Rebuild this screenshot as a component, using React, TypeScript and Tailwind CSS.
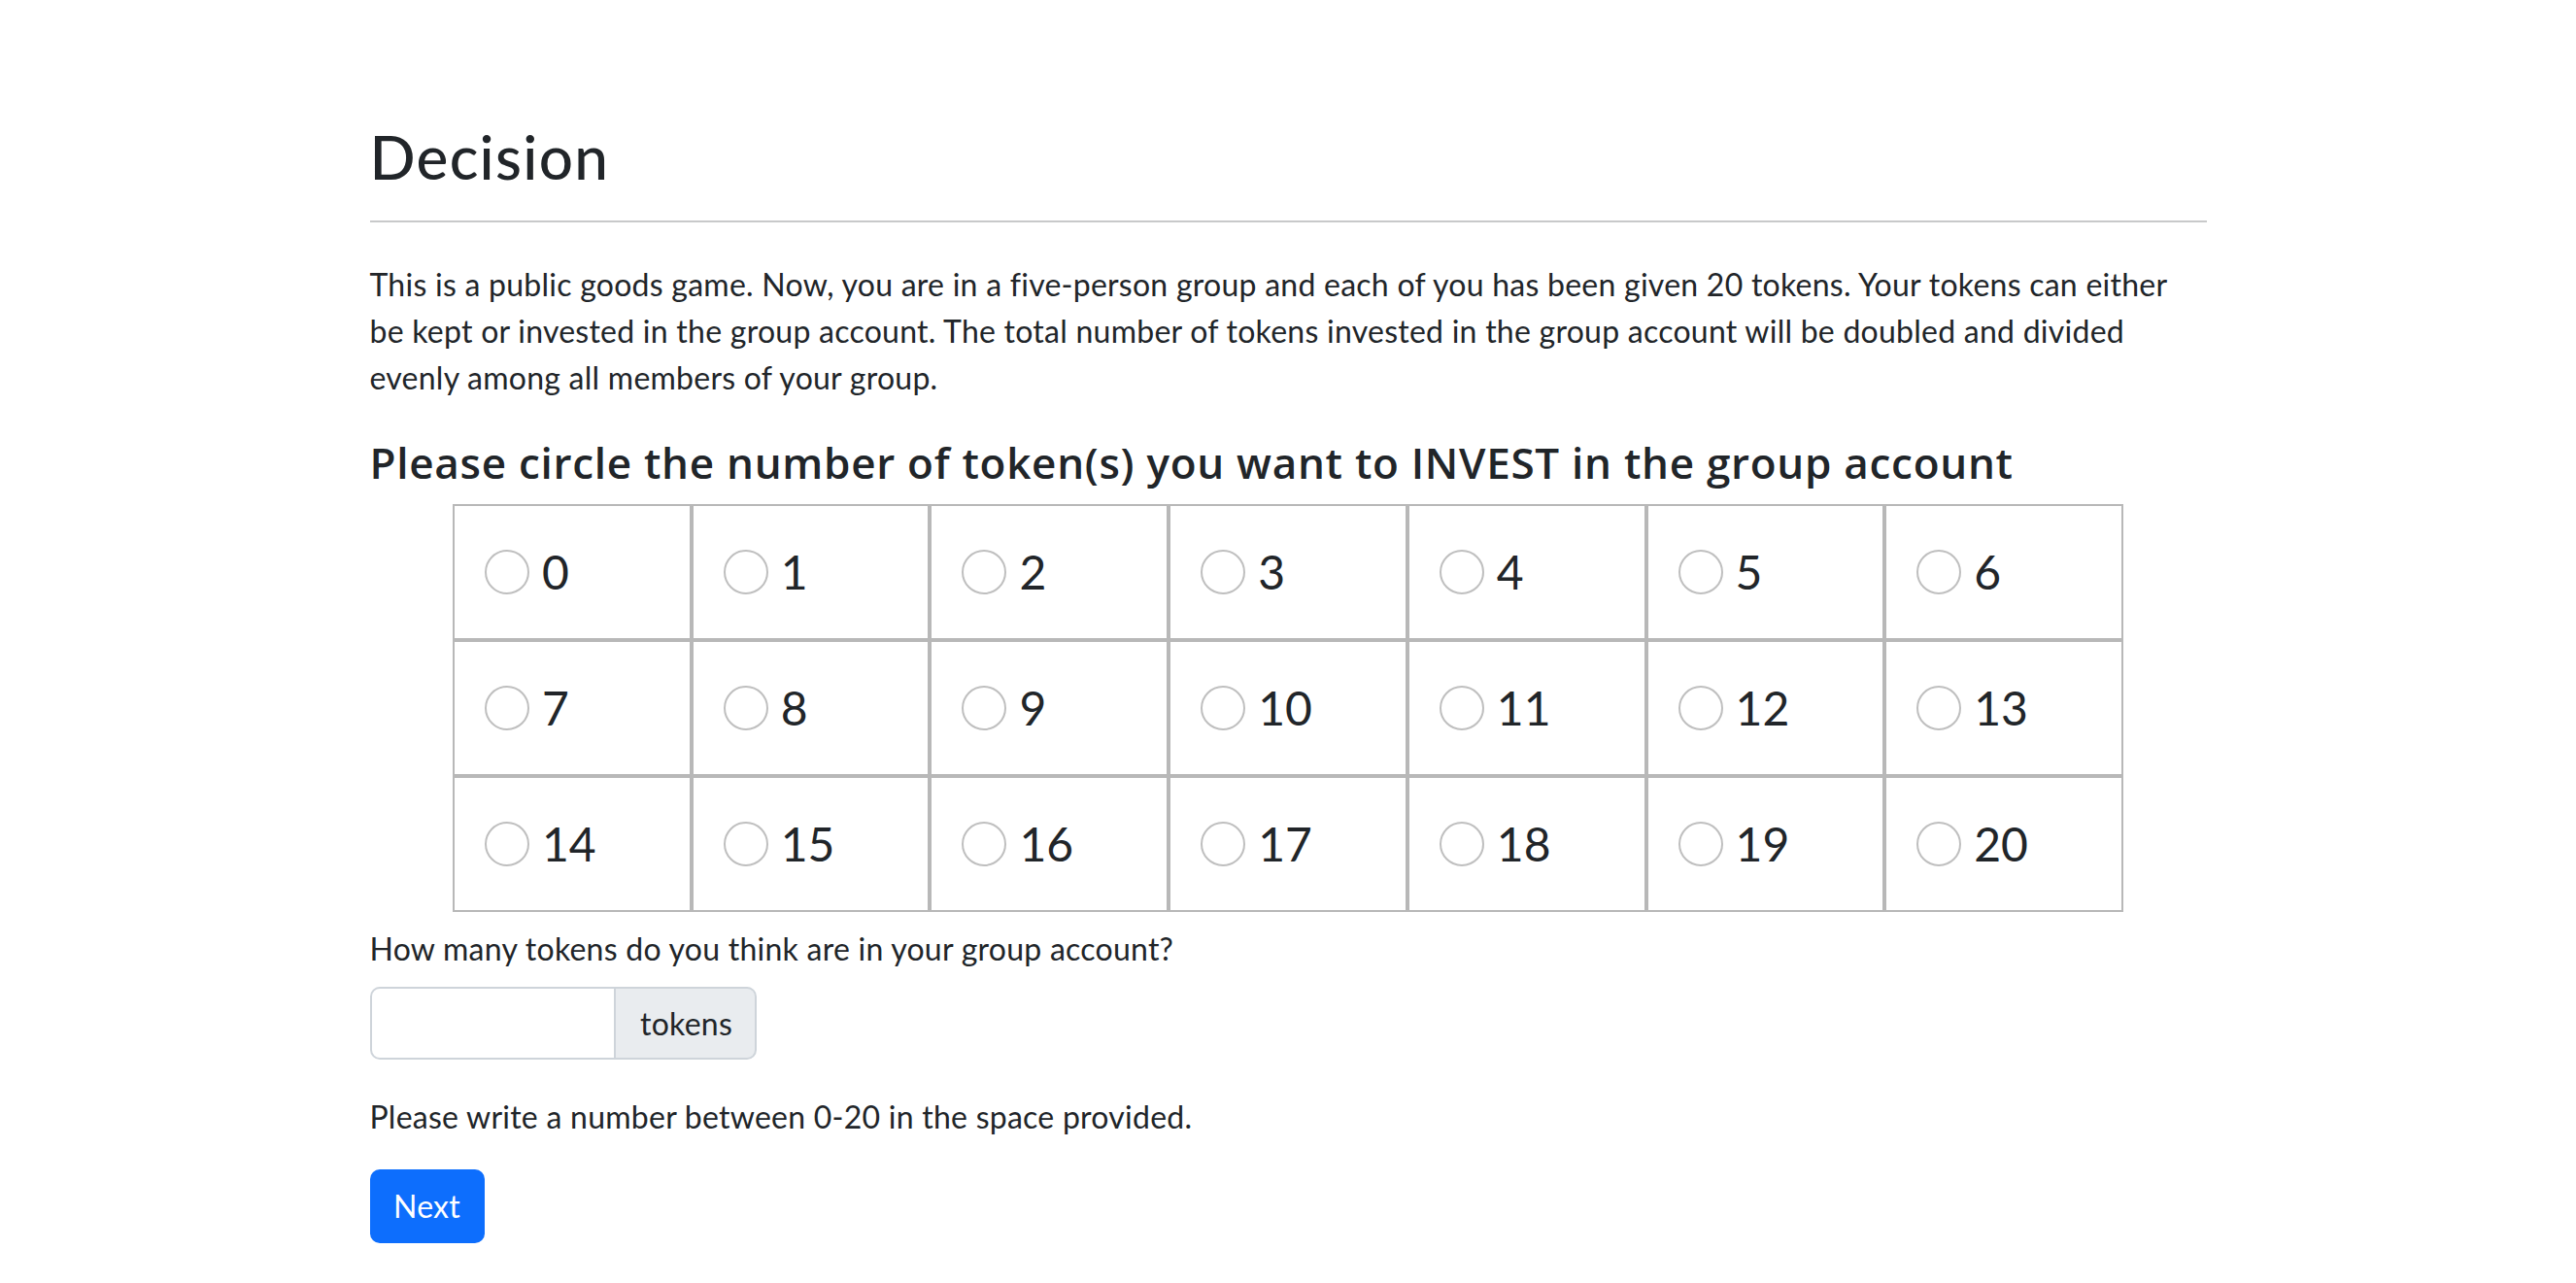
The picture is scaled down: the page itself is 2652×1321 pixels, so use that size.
import { useState } from "react";

const rows = [
  [0, 1, 2, 3, 4, 5, 6],
  [7, 8, 9, 10, 11, 12, 13],
  [14, 15, 16, 17, 18, 19, 20],
];

export default function App() {
  const [choice, setChoice] = useState<number | null>(null);
  const [guess, setGuess] = useState("");

  return (
    <div className="min-h-screen bg-white text-[#212529] font-['Lato',sans-serif] tracking-[0.25px]">
      <div className="mx-auto w-[1891px] pt-[124px]">
        <h2 className="text-[62px] leading-[74px] font-medium tracking-[1.3px]">
          Decision
        </h2>
        <hr className="mt-[29px] border-t-2 border-[#c8c9ca]" />

        <p className="mt-[40px] text-[32px] leading-[48px]">
          This is a public goods game. Now, you are in a five-person group and
          each of you has been given 20 tokens. Your tokens can either be kept
          or invested in the group account. The total number of tokens invested
          in the group account will be doubled and divided evenly among all
          members of your group.
        </p>

        <h4 className="mt-[37px] font-['Open_Sans',sans-serif] text-[44px] leading-[52px] font-semibold tracking-[0.72px]">
          Please circle the number of token(s) you want to INVEST in the group
          account
        </h4>

        <div className="mx-auto mt-[17px] grid w-[1720px] grid-cols-7">
          {rows.flat().map((n) => (
            <label
              key={n}
              className="flex h-[140px] cursor-pointer items-center gap-[13px] border-2 border-[#b8b8b8] pl-[31px]"
            >
              <span
                onClick={() => setChoice(n)}
                className={
                  choice === n
                    ? "h-[46px] w-[46px] rounded-full border-[14px] border-[#0d6efd]"
                    : "h-[46px] w-[46px] rounded-full border-2 border-[#bfbfbf]"
                }
              />
              <span className="text-[48px] leading-none tracking-normal">{n}</span>
            </label>
          ))}
        </div>

        <p className="mt-[14px] text-[32px] leading-[48px]">
          How many tokens do you think are in your group account?
        </p>

        <div className="mt-[15px] flex h-[75px] w-[398px]">
          <input
            value={guess}
            onChange={(e) => setGuess(e.target.value)}
            className="w-[253px] rounded-l-[10px] border-2 border-[#ced4da] px-4 text-[32px] outline-none"
          />
          <span className="flex flex-1 items-center justify-center rounded-r-[10px] border-2 border-l-0 border-[#ced4da] bg-[#e9ecef] pl-[3px] text-[32px]">
            tokens
          </span>
        </div>

        <p className="mt-[35px] text-[32px] leading-[48px]">
          Please write a number between 0-20 in the space provided.
        </p>

        <button className="mt-[30px] flex h-[76px] w-[118px] items-center justify-center rounded-[10px] bg-[#0d6efd] text-[32px] text-white">
          Next
        </button>
      </div>
    </div>
  );
}
